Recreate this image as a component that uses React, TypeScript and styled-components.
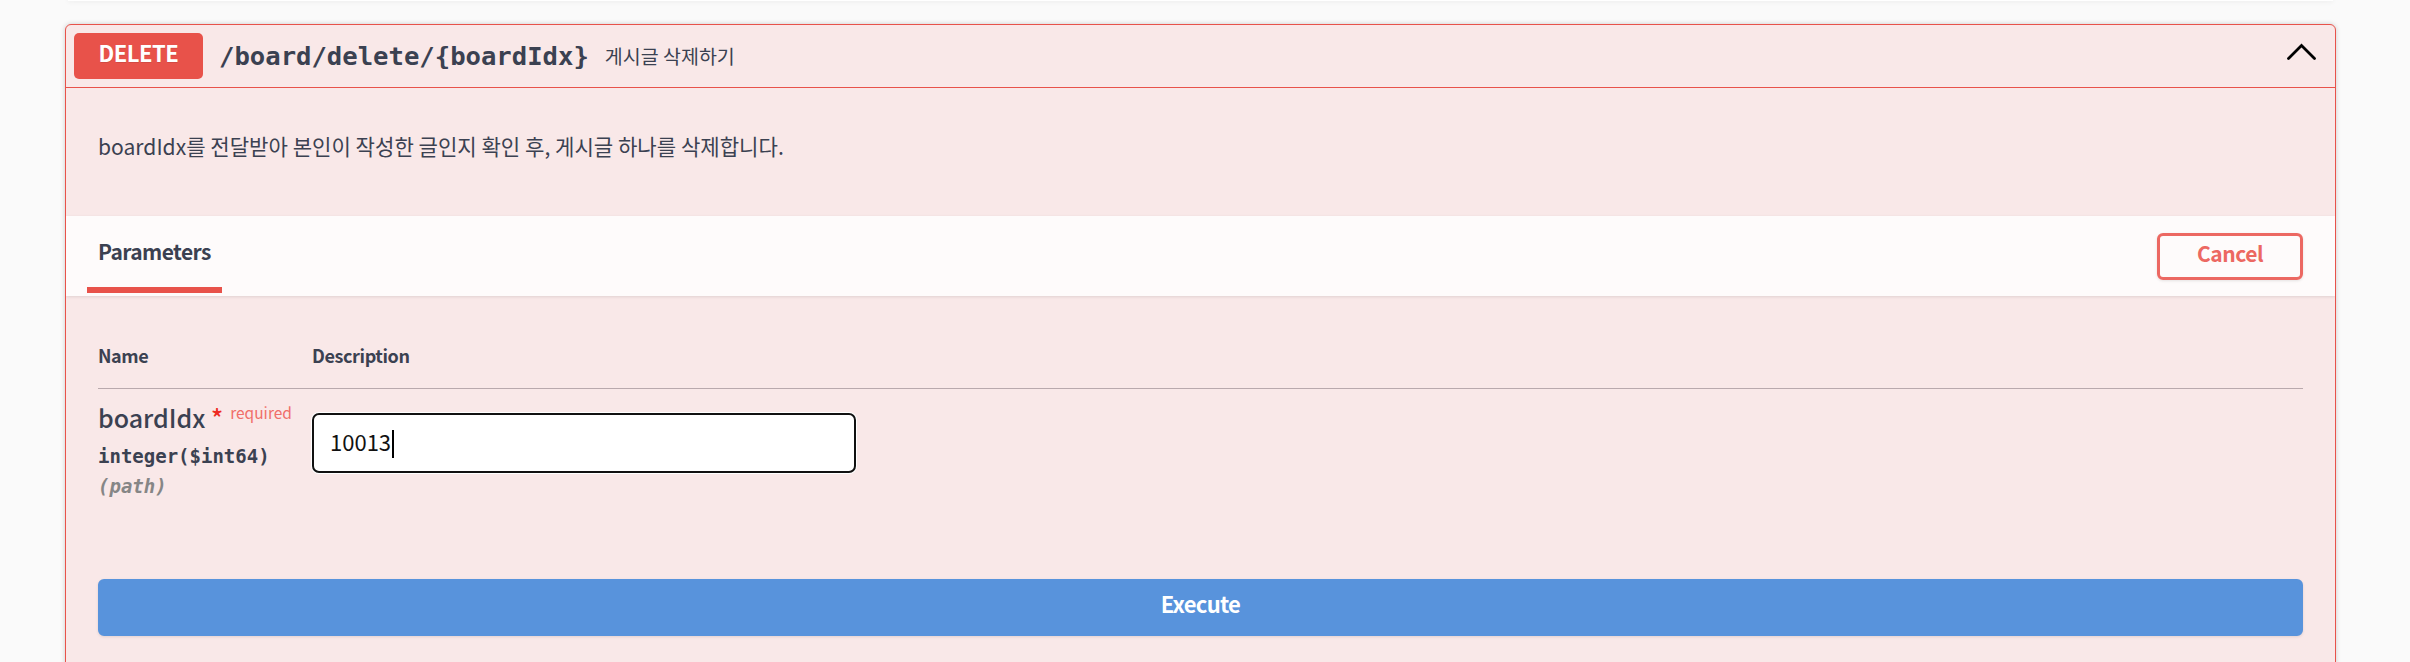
import React from "react";
import styled, { createGlobalStyle } from "styled-components";

const SANS = `"Noto Sans CJK KR", "Noto Sans", sans-serif`;
const MONO = `"DejaVu Sans Mono", "Liberation Mono", monospace`;
const TEXT = "#3b4151";
const RED = "#e8524a";

const GlobalStyle = createGlobalStyle`
  html, body { margin: 0; padding: 0; background: #fafafa; }
  body { font-family: ${SANS}; color: ${TEXT}; overflow: hidden; }
  * { box-sizing: border-box; }
`;

const Page = styled.div`
  padding: 0 74px 0 65px;
`;

const PrevBlock = styled.div`
  height: 1px;
  margin: 0 3px 23px;
  background: #fff;
  box-shadow: 0 0 5px rgba(0, 0, 0, 0.19);
`;

const OpBlock = styled.section`
  border: 1px solid ${RED};
  border-radius: 6px;
  background: #f9e8e8;
  box-shadow: 0 0 5px rgba(0, 0, 0, 0.19);
  overflow: hidden;
`;

const Summary = styled.div`
  display: flex;
  align-items: center;
  padding: 8px;
  border-bottom: 1px solid ${RED};
`;

const Method = styled.span`
  min-width: 129px;
  height: 46px;
  padding-bottom: 7px;
  line-height: 39px;
  background: ${RED};
  color: #fff;
  font-size: 22px;
  font-weight: 700;
  letter-spacing: -0.5px;
  text-align: center;
  border-radius: 5px;
  text-shadow: 0 1px 0 rgba(0, 0, 0, 0.1);
`;

const PathText = styled.span`
  padding: 0 16px;
  font-family: ${MONO};
  font-size: 25.6px;
  font-weight: 700;
  line-height: 32px;
  color: ${TEXT};
`;

const SummaryDesc = styled.span`
  flex: 1;
  font-size: 19.5px;
  line-height: 26px;
  color: ${TEXT};
`;

const Toggle = styled.button`
  display: flex;
  margin-right: 11px;
  padding: 0;
  border: 0;
  background: none;
  cursor: pointer;
`;

const DescriptionWrapper = styled.div`
  padding: 43px 32px 55px;
`;

const DescText = styled.p`
  margin: 0;
  font-size: 21.1px;
  line-height: 30px;
  color: ${TEXT};
`;

const SectionHeader = styled.div`
  display: flex;
  align-items: center;
  justify-content: space-between;
  height: 80px;
  padding: 0 32px;
  background: rgba(255, 255, 255, 0.8);
  box-shadow: 0 1px 3px rgba(0, 0, 0, 0.1);
`;

const TabItem = styled.div`
  align-self: stretch;
  display: flex;
  flex-direction: column;
  justify-content: flex-end;
  align-items: center;
  padding-bottom: 3px;
`;

const TabLabel = styled.h4`
  margin: 0;
  font-size: 21px;
  font-weight: 700;
  letter-spacing: -0.6px;
  line-height: 30px;
  color: ${TEXT};
`;

const TabBar = styled.div`
  flex-shrink: 0;
  width: 120%;
  height: 6px;
  margin-top: 21px;
  background: ${RED};
`;

const Button = styled.button<{ $variant: "cancel" | "execute" }>`
  font-family: ${SANS};
  font-weight: 700;
  border-radius: 6px;
  box-shadow: 0 1px 3px rgba(0, 0, 0, 0.1);
  cursor: pointer;
  ${({ $variant }) =>
    $variant === "cancel"
      ? `
    border: 3px solid #ec6862;
    background: transparent;
    color: #ec6862;
    font-size: 21px;
    letter-spacing: -0.5px;
    line-height: 29px;
    padding: 3px 37px 9px;
  `
      : `
    width: 100%;
    border: 3px solid #5893dc;
    background: #5893dc;
    color: #fff;
    font-size: 22px;
    letter-spacing: -0.7px;
    line-height: 35px;
    padding: 4px 0 12px;
  `}
`;

const TableContainer = styled.div`
  padding: 32px;
`;

const ParamGrid = styled.div`
  display: grid;
  grid-template-columns: 214px 1fr;
`;

const HeadCell = styled.div`
  padding: 15px 0 21px;
  font-size: 18px;
  font-weight: 700;
  letter-spacing: -0.4px;
  line-height: 24px;
  color: ${TEXT};
  border-bottom: 1px solid #b9a9ad;
`;

const NameCell = styled.div`
  padding: 13px 0 17px;
`;

const DescCell = styled.div`
  padding: 13px 0 0;
`;

const ParamName = styled.div`
  font-size: 25px;
  font-weight: 500;
  line-height: 30px;
  color: ${TEXT};
  white-space: nowrap;
`;

const Star = styled.span`
  color: #ee2b22;
`;

const Required = styled.span`
  padding-left: 7px;
  font-size: 15.5px;
  font-weight: 400;
  line-height: 16px;
  vertical-align: 9px;
  color: #f06e69;
`;

const ParamType = styled.div`
  padding: 12px 0 6px;
  font-family: ${MONO};
  font-size: 19px;
  font-weight: 700;
  line-height: 24px;
  color: ${TEXT};
`;

const ParamIn = styled.div`
  font-family: ${MONO};
  font-size: 19px;
  font-weight: 700;
  font-style: italic;
  line-height: 24px;
  color: #868686;
`;

const InputBox = styled.div`
  width: 544px;
  height: 60px;
  margin-top: 11px;
  padding: 10px 16px 14px;
  border: 2px solid #111;
  border-radius: 7px;
  background: #fff;
  box-shadow: 0 0 0 1px #fff;
  font-size: 22px;
  line-height: 32px;
  color: #111;
`;

const Caret = styled.span`
  display: inline-block;
  width: 2px;
  height: 28px;
  margin-left: 1px;
  vertical-align: -7px;
  background: #000;
`;

const ExecuteWrapper = styled.div`
  padding: 32px;
`;

const ChevronUp = () => (
  <svg width="32" height="46" viewBox="0 0 32 46" aria-hidden="true">
    <polyline
      points="4.5,25.5 17.5,12.5 30.5,25.5"
      fill="none"
      stroke="#000"
      strokeWidth="2.8"
      strokeLinecap="round"
      strokeLinejoin="miter"
    />
  </svg>
);

export default function App() {
  return (
    <>
      <GlobalStyle />
      <Page>
        <PrevBlock />
        <OpBlock>
          <Summary>
            <Method>DELETE</Method>
            <PathText>/board/delete/&#123;boardIdx&#125;</PathText>
            <SummaryDesc>게시글 삭제하기</SummaryDesc>
            <Toggle aria-label="collapse">
              <ChevronUp />
            </Toggle>
          </Summary>

          <DescriptionWrapper>
            <DescText>
              boardIdx를 전달받아 본인이 작성한 글인지 확인 후, 게시글 하나를 삭제합니다.
            </DescText>
          </DescriptionWrapper>

          <SectionHeader>
            <TabItem>
              <TabLabel>Parameters</TabLabel>
              <TabBar />
            </TabItem>
            <Button $variant="cancel">Cancel</Button>
          </SectionHeader>

          <TableContainer>
            <ParamGrid>
              <HeadCell>Name</HeadCell>
              <HeadCell>Description</HeadCell>
              <NameCell>
                <ParamName>
                  boardIdx<Star>&nbsp;*</Star>
                  <Required>required</Required>
                </ParamName>
                <ParamType>integer($int64)</ParamType>
                <ParamIn>(path)</ParamIn>
              </NameCell>
              <DescCell>
                <InputBox role="textbox">
                  10013
                  <Caret />
                </InputBox>
              </DescCell>
            </ParamGrid>
          </TableContainer>

          <ExecuteWrapper>
            <Button $variant="execute">Execute</Button>
          </ExecuteWrapper>
        </OpBlock>
      </Page>
    </>
  );
}
